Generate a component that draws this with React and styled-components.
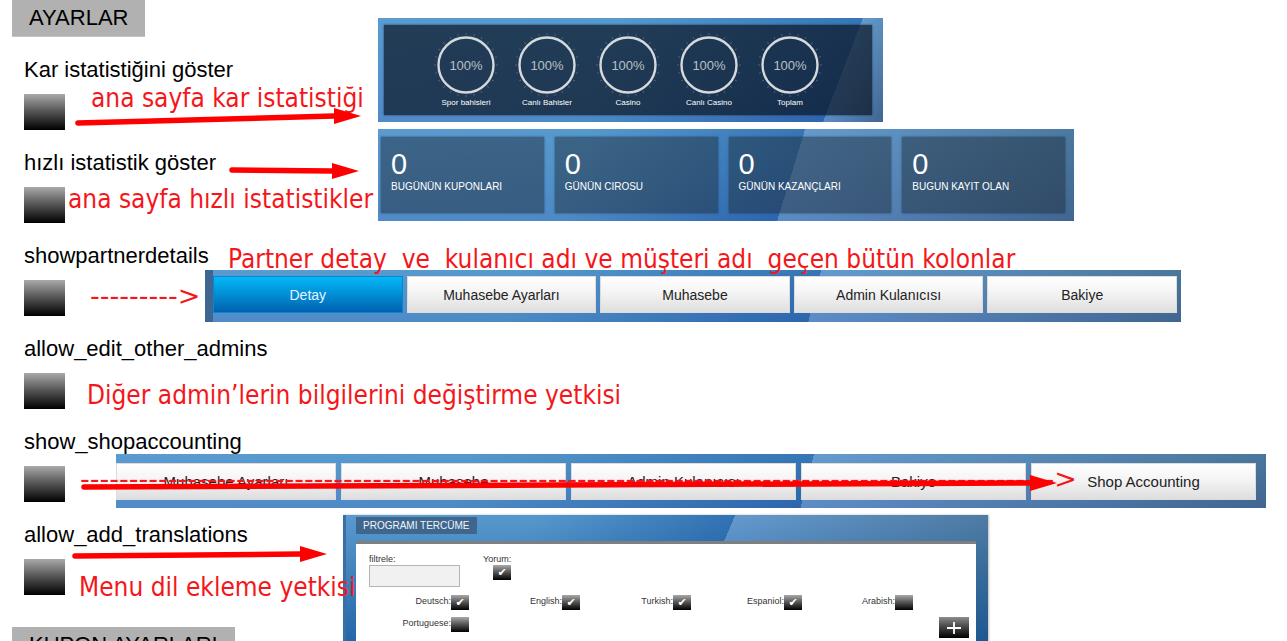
import React from "react";
import styled, { createGlobalStyle, css } from "styled-components";

const GlobalStyle = createGlobalStyle`
  *, *::before, *::after { box-sizing: border-box; }
  html, body { margin: 0; background: #fff; }
  body { font-family: "Liberation Sans", Arial, sans-serif; color: #000; }
  button, input { font: inherit; margin: 0; }
`;

const Page = styled.main`
  position: relative;
  display: grid;
  grid-template-columns: minmax(0, 1fr);
  height: 100vh;
  overflow: hidden;
`;

/* Settings list */

const Settings = styled.div`
  grid-area: 1 / 1;
  display: flex;
  flex-direction: column;
  align-items: flex-start;
  padding-left: 12px;
`;

const SectionTitle = styled.h2`
  margin: 0;
  padding: 0 17px;
  background: #b1b1b1;
  font-size: 22px;
  font-weight: 400;
  line-height: 36px;
  border-bottom: 1px solid #c4c4c4;
  white-space: nowrap;
`;

const SettingList = styled.div`
  display: flex;
  flex-direction: column;
  gap: 19px;
  padding: 19px 12px 32px;
`;

const Setting = styled.div`
  display: flex;
  flex-direction: column;
  align-items: flex-start;
  gap: 10px;
`;

const SettingLabel = styled.label`
  font-size: 22px;
  line-height: 28px;
  white-space: nowrap;
`;

const Toggle = styled.input.attrs({ type: "checkbox" })`
  appearance: none;
  display: grid;
  place-items: center;
  flex: none;
  width: ${(p) => (p.$small ? 18 : 41)}px;
  height: ${(p) => (p.$small ? 15 : 36)}px;
  background: linear-gradient(#a9a9a9, #555 48%, #000);

  &:checked::after {
    content: "✔";
    color: #fff;
    font: ${(p) => (p.$small ? 11 : 22)}px/1 "DejaVu Sans", sans-serif;
  }
`;

/* Blue panels */

const Shots = styled.div`
  grid-area: 1 / 1;
  display: flex;
  flex-direction: column;
  padding-top: 18px;
  pointer-events: none;
  & > * { pointer-events: auto; }
`;

const glass = css`
  background:
    linear-gradient(rgba(90, 170, 210, 0.16), rgba(30, 60, 150, 0.14)),
    linear-gradient(
      ${(p) => p.$angle}deg,
      #5a98d0 0,
      #5596cc ${(p) => p.$split / 2}%,
      #2f6cb0 ${(p) => p.$split}%,
      #6698cd ${(p) => p.$split}%,
      #466c90 100%
    );
`;

const ProfitPanel = styled.section`
  ${glass}
  margin: 0 404px 7px 378px;
  padding: 7px 11px 7px 6px;
`;

const ProfitBoard = styled.div`
  display: flex;
  justify-content: center;
  height: 90px;
  padding-top: 8px;
  background: rgba(12, 22, 36, 0.7);
  box-shadow: 0 0 2px rgba(10, 20, 40, 0.7);
`;

const Gauge = styled.figure`
  display: flex;
  flex-direction: column;
  align-items: center;
  width: 81px;
  margin: 0;
`;

const Dial = styled.div`
  display: grid;
  place-items: center;
  height: 64px;
  color: #b9c0c8;
  font-size: 13px;
  & > * { grid-area: 1 / 1; }
`;

const GaugeName = styled.figcaption`
  color: #fff;
  font-size: 8px;
  line-height: 12px;
  white-space: nowrap;
`;

const QuickPanel = styled.section`
  ${glass}
  display: grid;
  grid-template-columns: repeat(4, minmax(0, 1fr));
  gap: 11px;
  margin: 0 213px 49px 378px;
  padding: 8px 9px 8px 3px;
`;

const QuickCard = styled.div`
  height: 76px;
  padding: 11px 10px;
  background: rgba(31, 47, 62, 0.5);
  box-shadow: 0 0 2px rgba(20, 40, 70, 0.7);
  color: #fff;
`;

const QuickValue = styled.div`
  font-size: 29px;
  line-height: 32px;
`;

const QuickName = styled.div`
  font-size: 10px;
  line-height: 14px;
  white-space: nowrap;
`;

const TabBar = styled.nav`
  ${glass}
  display: grid;
`;

const PartnerTabs = styled(TabBar)`
  grid-template-columns: repeat(5, minmax(0, 1fr));
  gap: 4px;
  margin: 0 106px 132px 205px;
  padding: 6px 4px 9px 0;
  border-left: 8px solid #3f668f;
  font-size: 14px;
`;

const AccountTabs = styled(TabBar)`
  grid-template-columns: 220fr repeat(4, minmax(0, 225fr));
  gap: 5px;
  margin: 0 21px 7px 116px;
  padding: 9px 10px 8px 0;
  font-size: 15px;
`;

const Tab = styled.button`
  height: 37px;
  padding: 0;
  border: 1px solid ${(p) => (p.$active ? "#0a86cf" : "#dcdcdc")};
  background: ${(p) =>
    p.$active
      ? "linear-gradient(#03b8f8, #0062b0)"
      : "linear-gradient(#fff, #f4f4f4 45%, #dedede)"};
  color: ${(p) => (p.$active ? "#e4f4ff" : "#222")};
  line-height: 20px;
  white-space: nowrap;
`;

/* Translation panel */

const TranslatePanel = styled.section`
  margin: 0 299px 0 343px;
  padding: 0 12px 0 10px;
  border-left: 3px solid #3c6ea6;
  box-shadow: 1px 0 2px #bbb;
  background:
    linear-gradient(rgba(90, 170, 210, 0.1), rgba(0, 70, 140, 0.75) 85%),
    linear-gradient(
      ${(p) => p.$angle}deg,
      #5a98d0 0,
      #5596cc ${(p) => p.$split / 2}%,
      #2f6cb0 ${(p) => p.$split}%,
      #6698cd ${(p) => p.$split}%,
      #466c90 100%
    );
`;

const TranslateHead = styled.header`
  height: 26px;
  padding-top: 2px;
`;

const TranslateTitle = styled.h3`
  display: inline-block;
  margin: 0;
  padding: 0 7px;
  background: #3f678e;
  color: #f0f5fa;
  font-size: 10px;
  font-weight: 400;
  line-height: 17px;
  vertical-align: top;
  white-space: nowrap;
`;

const TranslateBody = styled.form`
  display: flex;
  flex-direction: column;
  gap: 8px;
  height: 160px;
  padding: 9px 7px 0 2px;
  border-top: 3px solid #7f7f7f;
  background: #fff;
  color: #333;
  font-size: 9px;
  line-height: 12px;
`;

const FilterRow = styled.div`
  display: flex;
  gap: 23px;
  padding-left: 11px;
`;

const Field = styled.label`
  display: flex;
  flex-direction: column;
  align-items: ${(p) => (p.$end ? "flex-end" : "flex-start")};
`;

const FilterInput = styled.input`
  width: 91px;
  height: 22px;
  border: 1px solid #b4b4b4;
  background: #f1f1f1;
`;

const LanguageArea = styled.div`
  display: flex;
  justify-content: space-between;
  align-items: flex-end;
`;

const LanguageGrid = styled.div`
  display: grid;
  grid-template-columns: repeat(5, 111px);
  gap: 7px 0;
  padding-bottom: 6px;
`;

const Language = styled.label`
  display: flex;
  justify-content: flex-end;
`;

const AddButton = styled.button`
  display: grid;
  place-items: center;
  width: 30px;
  height: 21px;
  padding: 0;
  border: 0;
  background: linear-gradient(#8d8d8d, #444 48%, #000);
`;

/* Red annotations laid over the page */

const Note = styled.p`
  position: absolute;
  left: ${(p) => p.$x}px;
  top: ${(p) => p.$y}px;
  margin: 0;
  color: #f5161a;
  font-family: ${(p) => (p.$dashes ? '"DejaVu Sans"' : '"DejaVu Sans Condensed", "Noto Sans"')}, sans-serif;
  font-size: ${(p) => (p.$dashes ? 27 : 26)}px;
  line-height: 32px;
  white-space: pre;
  pointer-events: none;
`;

const ArrowSvg = styled.svg`
  position: absolute;
  left: ${(p) => p.$x}px;
  top: ${(p) => p.$y}px;
  overflow: visible;
  pointer-events: none;
`;

function Arrow({ x, y, length, rise }) {
  const neck = length - 27;
  return (
    <ArrowSvg $x={x} $y={y} width={length} height="6" aria-hidden="true">
      <path d={`M0 0L${neck} ${-rise}`} stroke="#f00" strokeWidth="5.5" strokeLinecap="round" />
      <path d={`M${neck} ${-rise - 8}L${length} ${-rise}L${neck} ${-rise + 8}Z`} fill="#f00" />
    </ArrowSvg>
  );
}

const TICKS = Array.from({ length: 24 }, (_, i) => i * 15);

function DialRing() {
  return (
    <svg width="64" height="64" viewBox="-32 -32 64 64" aria-hidden="true">
      {TICKS.map((a) => (
        <path key={a} d="M0 -30V-32" stroke="#6d8291" strokeWidth="1" opacity="0.6" transform={`rotate(${a})`} />
      ))}
      <circle r="27.5" fill="none" stroke="#d6d9dc" strokeWidth="2.4" />
    </svg>
  );
}

const SETTINGS = [
  ["profit", "Kar istatistiğini göster"],
  ["quick", "hızlı istatistik göster"],
  ["partner", "showpartnerdetails"],
  ["admins", "allow_edit_other_admins"],
  ["shop", "show_shopaccounting"],
  ["translations", "allow_add_translations"],
];
const GAUGES = ["Spor bahisleri", "Canlı Bahisler", "Casino", "Canlı Casino", "Toplam"];
const QUICK = ["BUGÜNÜN KUPONLARI", "GÜNÜN CIROSU", "GÜNÜN KAZANÇLARI", "BUGUN KAYIT OLAN"];
const PARTNER_TABS = ["Detay", "Muhasebe Ayarları", "Muhasebe", "Admin Kulanıcısı", "Bakiye"];
const ACCOUNT_TABS = ["Muhasebe Ayarları", "Muhasebe", "Admin Kulanıcısı", "Bakiye", "Shop Accounting"];
const LANGUAGES = [
  ["Deutsch", true],
  ["English", true],
  ["Turkish", true],
  ["Espaniol", true],
  ["Arabish", false],
  ["Portuguese", false],
];

export default function App() {
  return (
    <Page>
      <GlobalStyle />
      <Settings>
        <SectionTitle>AYARLAR</SectionTitle>
        <SettingList>
          {SETTINGS.map(([id, name]) => (
            <Setting key={id}>
              <SettingLabel htmlFor={id}>{name}</SettingLabel>
              <Toggle id={id} />
            </Setting>
          ))}
        </SettingList>
        <SectionTitle>KUPON AYARLARI</SectionTitle>
      </Settings>

      <Shots>
        <ProfitPanel $angle={111} $split={89}>
          <ProfitBoard>
            {GAUGES.map((name) => (
              <Gauge key={name}>
                <Dial>
                  <DialRing />
                  <span>100%</span>
                </Dial>
                <GaugeName>{name}</GaugeName>
              </Gauge>
            ))}
          </ProfitBoard>
        </ProfitPanel>

        <QuickPanel $angle={107} $split={59}>
          {QUICK.map((name) => (
            <QuickCard key={name}>
              <QuickValue>0</QuickValue>
              <QuickName>{name}</QuickName>
            </QuickCard>
          ))}
        </QuickPanel>

        <PartnerTabs $angle={104} $split={62}>
          {PARTNER_TABS.map((name, i) => (
            <Tab key={name} type="button" $active={i === 0}>{name}</Tab>
          ))}
        </PartnerTabs>

        <AccountTabs $angle={104} $split={60}>
          {ACCOUNT_TABS.map((name) => (
            <Tab key={name} type="button">{name}</Tab>
          ))}
        </AccountTabs>

        <TranslatePanel $angle={113} $split={54}>
          <TranslateHead>
            <TranslateTitle>PROGRAMI TERCÜME</TranslateTitle>
          </TranslateHead>
          <TranslateBody>
            <FilterRow>
              <Field>
                filtrele:
                <FilterInput type="text" />
              </Field>
              <Field $end>
                Yorum:
                <Toggle $small defaultChecked />
              </Field>
            </FilterRow>
            <LanguageArea>
              <LanguageGrid>
                {LANGUAGES.map(([name, on]) => (
                  <Language key={name}>
                    {name}:
                    <Toggle $small defaultChecked={on} />
                  </Language>
                ))}
              </LanguageGrid>
              <AddButton type="button" aria-label="Ekle">
                <svg width="14" height="12" viewBox="0 0 14 12" aria-hidden="true">
                  <path d="M7 0V12M0 6H14" stroke="#fff" strokeWidth="1.8" />
                </svg>
              </AddButton>
            </LanguageArea>
          </TranslateBody>
        </TranslatePanel>
      </Shots>

      <Note $x={91} $y={82}>ana sayfa kar istatistiği</Note>
      <Note $x={68} $y={183}>ana sayfa hızlı istatistikler</Note>
      <Note $x={228} $y={243}>Partner detay  ve  kulanıcı adı ve müşteri adı  geçen bütün kolonlar</Note>
      <Note $dashes $x={90} $y={280}>{"-".repeat(9) + ">"}</Note>
      <Note $x={87} $y={379}>Diğer admin’lerin bilgilerini değiştirme yetkisi</Note>
      <Note $dashes $x={80} $y={463}>{"-".repeat(100) + ">"}</Note>
      <Note $x={79} $y={571}>Menu dil ekleme yetkisi</Note>
      <Arrow x={78} y={123} length={283} rise={7} />
      <Arrow x={232} y={170} length={127} rise={-1} />
      <Arrow x={84} y={487} length={973} rise={4} />
      <Arrow x={75} y={556} length={252} rise={2} />
    </Page>
  );
}
